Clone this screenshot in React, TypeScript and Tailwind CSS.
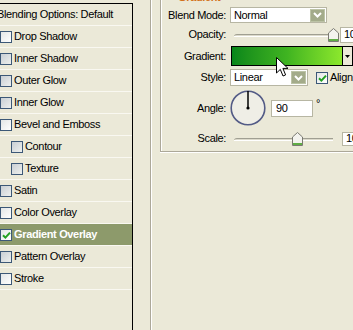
import React from "react";

type Item = { label: string; indent?: boolean; gray?: boolean; checked?: boolean; active?: boolean };

const items: Item[] = [
  { label: "Drop Shadow" },
  { label: "Inner Shadow", gray: true },
  { label: "Outer Glow", gray: true },
  { label: "Inner Glow", gray: true },
  { label: "Bevel and Emboss" },
  { label: "Contour", indent: true, gray: true },
  { label: "Texture", indent: true, gray: true },
  { label: "Satin", gray: true },
  { label: "Color Overlay" },
  { label: "Gradient Overlay", checked: true, active: true },
  { label: "Pattern Overlay", gray: true },
  { label: "Stroke" },
];

function Check({ checked, gray }: { checked?: boolean; gray?: boolean }) {
  return (
    <span
      className={
        gray
          ? "relative block w-[12px] h-[12px] shrink-0 border border-[#3c5877] bg-gradient-to-br from-[#c9cfd4] to-[#eef0ee]"
          : "relative block w-[12px] h-[12px] shrink-0 border border-[#3c5877] bg-gradient-to-br from-[#e3e6e6] to-white"
      }
    >
      {checked && (
        <svg className="absolute left-[1px] top-[1px]" width="9" height="9" viewBox="0 0 9 9">
          <path d="M1 4.2 L3.4 6.6 L8 1.6" fill="none" stroke="#21a121" strokeWidth="2" />
        </svg>
      )}
    </span>
  );
}

function DropBtn() {
  return (
    <span className="ml-auto mr-[1px] flex w-[15px] h-[13px] items-center justify-center bg-[#a3ab8a] border border-[#bcc3a6]">
      <svg width="9" height="6" viewBox="0 0 9 6">
        <path d="M1 1 L4.5 4.5 L8 1" fill="none" stroke="#ffffff" strokeWidth="2" />
      </svg>
    </span>
  );
}

function Thumb() {
  return (
    <svg width="11" height="14" viewBox="0 0 11 14">
      <path d="M5.5 0.5 L10.5 5 V13.5 H0.5 V5 Z" fill="#f3f3ee" stroke="#7a7a72" />
      <rect x="1" y="11" width="9" height="2" fill="#5fae45" />
    </svg>
  );
}

function Slider({ thumbLeft }: { thumbLeft: number }) {
  return (
    <div className="relative w-[108px] h-[14px]">
      <div className="absolute left-[4px] top-[6px] w-[99px] h-[3px] border-t border-[#a09f92] border-b border-b-white bg-[#dcdacb] rounded-tl-[3px]" />
      <div className="absolute top-0" style={{ left: thumbLeft }}>
        <Thumb />
      </div>
    </div>
  );
}

function Label({ children }: { children: React.ReactNode }) {
  return <div className="w-[65px] shrink-0 text-right">{children}</div>;
}

export default function App() {
  return (
    <div className="relative flex w-[353px] h-[330px] overflow-hidden bg-[#ebe9d8] text-[11px] leading-[13px] tracking-[-0.35px] text-black font-['Liberation_Sans',Arial,sans-serif]">
      {/* Left list */}
      <div className="mt-[3px] w-[133px] shrink-0 border-t border-r border-black flex flex-col">
        <div className="h-[22px] flex items-center border-b border-[#f9f8f1]">
          <span className="ml-[-3px] whitespace-nowrap">Blending Options: Default</span>
        </div>
        {items.map((it) => (
          <div
            key={it.label}
            className={
              it.active
                ? "h-[22px] flex items-center border-b border-[#f9f8f1] bg-[#8d9a6b] text-white font-bold"
                : "h-[22px] flex items-center border-b border-[#f9f8f1]"
            }
          >
            <span className={it.indent ? "ml-[11px]" : "ml-0"}>
              <Check checked={it.checked} gray={it.gray} />
            </span>
            <span className="ml-[2px] whitespace-nowrap">{it.label}</span>
          </div>
        ))}
      </div>

      {/* spacer + etched line */}
      <div className="w-[17px] shrink-0" />
      <div className="w-[2px] shrink-0 border-l border-[#aca899] bg-white" />
      <div className="w-[8px] shrink-0" />

      {/* Group box */}
      <div className="relative flex-1 self-start h-[152px] border-l border-b border-[#aca899] shadow-[inset_1px_0_0_#ffffff,0_1px_0_#ffffff]">
        <span className="absolute left-[15px] top-[-9px] px-[2px] font-bold text-[#d2721c] whitespace-nowrap">Gradient</span>

        <div className="flex flex-col pt-[7px] whitespace-nowrap">
          {/* Blend mode */}
          <div className="flex items-center h-[16px]">
            <Label>Blend Mode:</Label>
            <div className="ml-[4px] flex items-center w-[97px] h-[16px] border border-[#b7b6a3] bg-white">
              <span className="pl-[3px]">Normal</span>
              <DropBtn />
            </div>
          </div>

          {/* Opacity */}
          <div className="flex items-center h-[23px]">
            <Label>Opacity:</Label>
            <div className="ml-[4px]">
              <Slider thumbLeft={98} />
            </div>
            <div className="ml-[2px] w-[40px] h-[16px] border border-[#b7b6a3] bg-white pl-[3px] flex items-center">100</div>
          </div>

          {/* Gradient */}
          <div className="flex items-center h-[20px]">
            <Label>Gradient:</Label>
            <div className="ml-[5px] flex w-[122px] h-[20px] border border-black">
              <div className="flex-1 bg-gradient-to-r from-[#06861a] via-[#3fb421] to-[#8ce82d]" />
              <div className="w-[10px] border-l border-black bg-[#ece9d8] flex items-center justify-center">
                <svg width="5" height="3" viewBox="0 0 5 3">
                  <path d="M0 0 H5 L2.5 3 Z" fill="#000" />
                </svg>
              </div>
            </div>
          </div>

          {/* Style */}
          <div className="mt-[3px] flex items-center h-[17px]">
            <Label>Style:</Label>
            <div className="ml-[4px] flex items-center w-[78px] h-[17px] border border-[#b7b6a3] bg-white">
              <span className="pl-[3px]">Linear</span>
              <DropBtn />
            </div>
            <span className="ml-[8px]">
              <Check checked />
            </span>
            <span className="ml-[2px]">Align</span>
          </div>

          {/* Angle */}
          <div className="mt-[4px] flex items-center h-[36px]">
            <Label>Angle:</Label>
            <svg className="ml-[4px] shrink-0" width="36" height="36" viewBox="0 0 36 36">
              <circle cx="18" cy="18" r="16.8" fill="#efeee6" stroke="#535b86" strokeWidth="1.6" />
              <line x1="18" y1="18" x2="18" y2="1" stroke="#000" strokeWidth="1.5" />
              <circle cx="18" cy="18" r="1.6" fill="#000" />
            </svg>
            <div className="ml-[5px] w-[42px] h-[17px] border border-[#b7b6a3] bg-white pl-[4px] flex items-center">90</div>
            <span className="ml-[3px] self-start mt-[7px]">°</span>
          </div>

          {/* Scale */}
          <div className="flex items-center h-[25px]">
            <Label>Scale:</Label>
            <div className="ml-[4px]">
              <Slider thumbLeft={62} />
            </div>
            <div className="ml-[4px] w-[40px] h-[14px] border border-[#b7b6a3] bg-white pl-[3px] flex items-center">100</div>
          </div>
        </div>
      </div>

      {/* Mouse cursor */}
      <svg className="absolute left-[276px] top-[57px]" width="13" height="21" viewBox="0 0 13 21">
        <path d="M0.5 0.5 L0.5 16 L4.3 12.4 L7 19 L9.6 17.9 L6.9 11.4 L12 11.4 Z" fill="#ffffff" stroke="#000000" strokeWidth="1" strokeLinejoin="round" />
      </svg>
    </div>
  );
}
